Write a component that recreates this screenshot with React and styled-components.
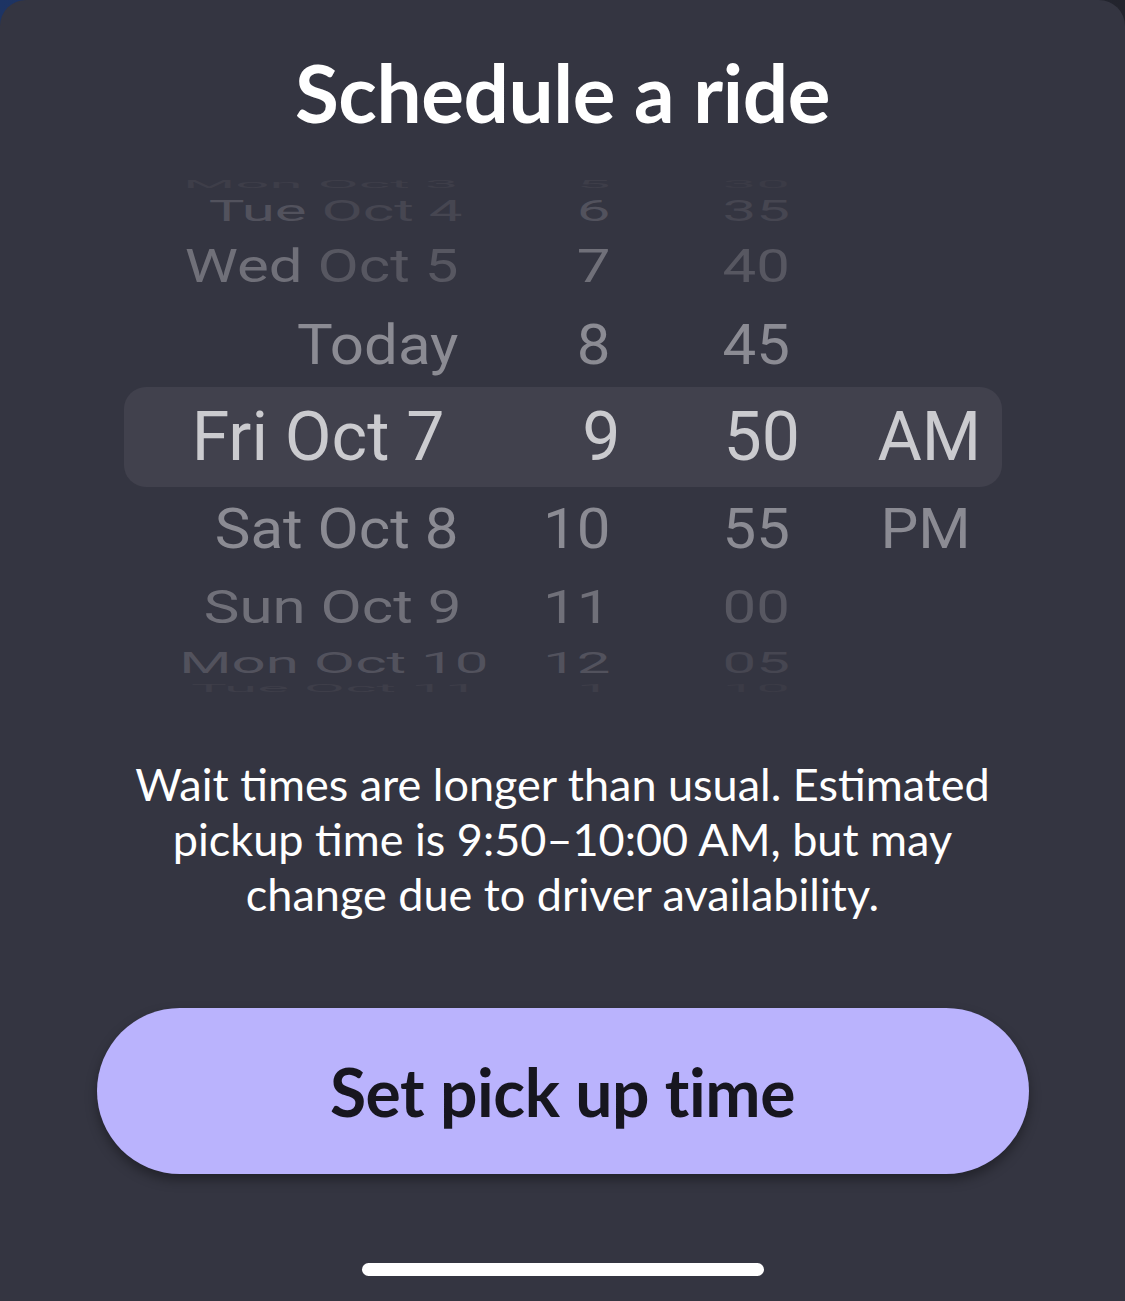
import React from "react";
import styled, { createGlobalStyle } from "styled-components";

const GlobalStyle = createGlobalStyle`
  html, body {
    margin: 0;
    padding: 0;
  }
  body {
    background: linear-gradient(90deg, #1d3464 0%, #23242d 100%);
    -webkit-font-smoothing: antialiased;
  }
`;

const Sheet = styled.div`
  width: 1125px;
  height: 1301px;
  box-sizing: border-box;
  background: #343541;
  border-radius: 26px 26px 0 0;
  display: flex;
  flex-direction: column;
  align-items: center;
  padding-top: 52px;
  overflow: hidden;
`;

const Title = styled.h1`
  margin: 0;
  font-family: Lato, "Noto Sans", sans-serif;
  font-weight: 700;
  font-size: 80px;
  line-height: 80px;
  color: #ffffff;
  letter-spacing: -0.4px;
`;

const Picker = styled.div`
  position: relative;
  width: 878px;
  height: 540px;
  margin-top: 35px;
  display: flex;
`;

const Highlight = styled.div`
  position: absolute;
  left: 0;
  right: 0;
  top: 220px;
  height: 100px;
  border-radius: 22px;
  background: #41414d;
`;

const Wheel = styled.div`
  position: relative;
  width: ${(p) => p.$width}px;
  height: 100%;
`;

const Item = styled.div`
  position: absolute;
  left: ${(p) => p.$pad || 0}px;
  right: 0;
  top: 50%;
  height: 80px;
  margin-top: -40px;
  line-height: 80px;
  text-align: ${(p) => p.$align};
  white-space: nowrap;
  font-family: Roboto, "Liberation Sans", sans-serif;
  font-weight: 400;
  font-size: ${(p) => (p.$level === 0 ? 68 : 60)}px;
  color: ${(p) => p.$color};
`;

const Dim = styled.span`
  color: ${(p) => p.$color};
`;

const Notice = styled.p`
  margin: 50px 0 0;
  width: 880px;
  text-align: center;
  font-family: Lato, "Noto Sans", sans-serif;
  font-weight: 400;
  font-size: 45px;
  line-height: 55px;
  color: #ffffff;
`;

const Button = styled.button`
  margin-top: 86px;
  width: 932px;
  height: 166px;
  border: none;
  border-radius: 83px;
  background: #bab3fd;
  box-shadow: 0 6px 12px rgba(0, 0, 0, 0.35);
  font-family: Lato, "Noto Sans", sans-serif;
  font-weight: 700;
  font-size: 66px;
  color: #17161f;
  letter-spacing: -0.4px;
  cursor: pointer;
`;

const HomeBar = styled.div`
  margin-top: 89px;
  width: 402px;
  height: 13px;
  border-radius: 7px;
  background: #ffffff;
`;

const COLORS = ["#cbcbcf", "#8b8b93", "#707079", "#52525d", "#3e3e49"];
const DIM = ["#cbcbcf", "#8b8b93", "#575761", "#464651", "#3b3b46"];

const R = 269;
const D = 4350;
const STEP = 20;

const place = (offset) => {
  const a = (offset * STEP * Math.PI) / 180;
  const k = D / (D + R * (1 - Math.cos(a)));
  const y = R * Math.sin(a) * k;
  const sy = Math.cos(a);
  return `translateY(${y.toFixed(1)}px) scaleY(${sy.toFixed(3)})`;
};

// each item: [text, dimmed tail, horizontal nudge]
const columns = [
  {
    key: "date",
    width: 335,
    align: "right",
    shift: -14,
    items: [
      ["Mon Oct 3"],
      ["Tue", " Oct 4", 4],
      ["Wed", " Oct 5"],
      ["Today"],
      ["Fri Oct 7"],
      ["Sat Oct 8"],
      ["Sun Oct 9", null, 3],
      ["Mon Oct 10", null, 30],
      ["Tue Oct 11", null, 20],
    ],
  },
  {
    key: "hour",
    width: 152,
    align: "right",
    shift: 10,
    items: [["5"], ["6"], ["7"], ["8"], ["9"], ["10"], ["11"], ["12"], ["1"]],
  },
  {
    key: "minute",
    width: 250,
    pad: 112,
    align: "left",
    shift: 1,
    dimAll: true,
    items: [["30"], ["35"], ["40"], ["45"], ["50"], ["55"], ["00"], ["05"], ["10"]],
  },
  {
    key: "ampm",
    width: 141,
    pad: 20,
    align: "left",
    shift: -3,
    items: [null, null, null, null, ["AM"], ["PM"], null, null, null],
  },
];

function WheelColumn({ col }) {
  return (
    <Wheel $width={col.width}>
      {col.items.map((it, i) => {
        if (!it) return null;
        const offset = i - 4;
        const level = Math.abs(offset);
        const color = col.dimAll ? DIM[level] : COLORS[level];
        const shift = level === 0 ? col.shift : it[2] || 0;
        return (
          <Item
            key={i}
            $pad={col.pad}
            $align={col.align}
            $level={level}
            $color={color}
            style={{ transform: `translateX(${shift}px) ${place(offset)}` }}
          >
            {it[0]}
            {it[1] && <Dim $color={DIM[level]}>{it[1]}</Dim>}
          </Item>
        );
      })}
    </Wheel>
  );
}

export default function App() {
  return (
    <>
      <GlobalStyle />
      <Sheet>
        <Title>Schedule a ride</Title>
        <Picker>
          <Highlight />
          {columns.map((col) => (
            <WheelColumn key={col.key} col={col} />
          ))}
        </Picker>
        <Notice>
          Wait times are longer than usual. Estimated pickup time is
          9:50–10:00 AM, but may change due to driver availability.
        </Notice>
        <Button>Set pick up time</Button>
        <HomeBar />
      </Sheet>
    </>
  );
}
